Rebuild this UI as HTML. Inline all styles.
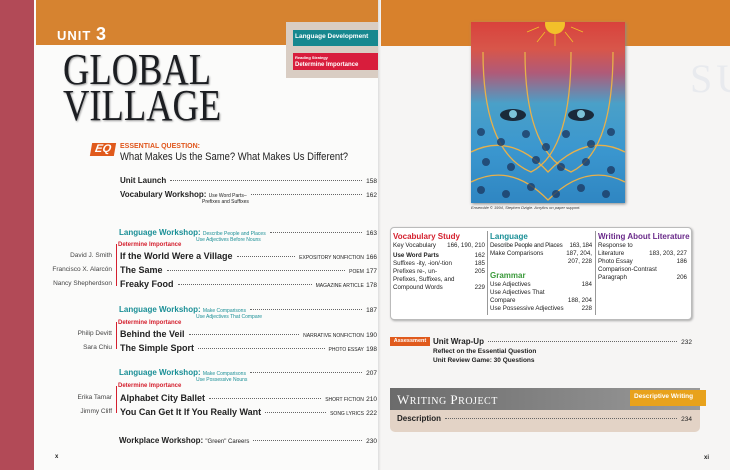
<!DOCTYPE html>
<html><head><meta charset="utf-8"><style>
*{margin:0;padding:0;box-sizing:border-box}
body{width:730px;height:470px;overflow:hidden;background:#f7f6f4;font-family:"Liberation Sans",sans-serif;position:relative;color:#222}
.a{position:absolute;white-space:nowrap}
.b{font-weight:bold}
.row{position:absolute;display:flex;align-items:baseline;font-size:8px}
.dots{flex:1;border-bottom:1px dotted #666;margin:0 4px;transform:translateY(-2px)}
.teal{color:#1a8f96}
.red{color:#d4202e}
.sm{font-size:5px}
.auth{position:absolute;font-size:6.5px;color:#444;text-align:right;width:112px;left:0}
.di{position:absolute;font-size:6px;font-weight:bold;color:#d4202e;left:118px}
.brk{position:absolute;left:116px;width:1px;background:#d4202e}
.box div{font-size:6.2px;line-height:8px}
</style></head><body>
<!-- left page -->
<div class="a" style="left:0;top:0;width:34px;height:470px;background:#b24a57"></div>
<div class="a" style="left:34px;top:0;width:344px;height:470px;background:#fbfbfa"></div>
<div class="a" style="left:36px;top:0;width:342px;height:45px;background:#d68330"></div>
<div class="a b" style="left:57px;top:24px;font-size:13px;color:#fff;letter-spacing:1px">UNIT <span style="font-size:18px">3</span></div>
<div class="a" style="left:286px;top:22px;width:94px;height:56px;background:#d9cdc3"></div>
<div class="a b" style="left:293px;top:30px;width:87px;height:16px;background:#17888f;color:#fff;font-size:6.5px;padding:3px 2px">Language Development</div>
<div class="a b" style="left:293px;top:53px;width:87px;height:17px;background:#d81d3c;color:#fff;font-size:6px;padding:1px 2px;line-height:7px"><span style="font-size:4px">Reading Strategy</span><br>Determine Importance</div>
<div class="a" style="left:63px;top:52px;font-family:'Liberation Serif',serif;font-size:44px;line-height:36px;color:#1c1e22;transform:scaleX(0.83);transform-origin:left top;text-shadow:1px 1px 2px #999">GLOBAL<br>VILLAGE</div>
<div class="a b" style="left:91px;top:143px;width:24px;height:13px;background:#e05a1c;color:#fff;font-size:11px;font-style:italic;text-align:center;line-height:13px;transform:skewX(-10deg)">EQ</div>
<div class="a b" style="left:120px;top:143px;font-size:7px;color:#e0561c">ESSENTIAL QUESTION:</div>
<div class="a" style="left:120px;top:151px;font-size:11px;color:#222;transform:scaleX(0.86);transform-origin:left top">What Makes Us the Same? What Makes Us Different?</div>

<div class="row" style="left:120px;top:176px;width:257px"><span class="b">Unit Launch</span><span class="dots"></span><span style="font-size:6.5px">158</span></div>
<div class="row" style="left:120px;top:190px;width:257px"><span class="b">Vocabulary Workshop:</span>&nbsp;<span class="sm">Use Word Parts–</span><span class="dots"></span><span style="font-size:6.5px">162</span></div>
<div class="a sm" style="left:202px;top:199px">Prefixes and Suffixes</div>

<div class="row" style="left:119px;top:228px;width:258px"><span class="b teal">Language Workshop:</span>&nbsp;<span class="sm teal">Describe People and Places</span><span class="dots"></span><span style="font-size:6.5px">163</span></div>
<div class="a sm teal" style="left:196px;top:237px">Use Adjectives Before Nouns</div>
<div class="brk" style="top:244px;height:42px"></div><div class="di" style="top:242px">Determine Importance</div>
<div class="auth" style="top:252px">David J. Smith</div>
<div class="row" style="left:120px;top:251px;width:257px"><span class="b" style="font-size:9px">If the World Were a Village</span><span class="dots"></span><span class="sm">EXPOSITORY NONFICTION</span>&nbsp;<span style="font-size:6.5px">166</span></div>
<div class="auth" style="top:266px">Francisco X. Alarcón</div>
<div class="row" style="left:120px;top:265px;width:257px"><span class="b" style="font-size:9px">The Same</span><span class="dots"></span><span class="sm">POEM</span>&nbsp;<span style="font-size:6.5px">177</span></div>
<div class="auth" style="top:280px">Nancy Shepherdson</div>
<div class="row" style="left:120px;top:279px;width:257px"><span class="b" style="font-size:9px">Freaky Food</span><span class="dots"></span><span class="sm">MAGAZINE ARTICLE</span>&nbsp;<span style="font-size:6.5px">178</span></div>

<div class="row" style="left:119px;top:305px;width:258px"><span class="b teal">Language Workshop:</span>&nbsp;<span class="sm teal">Make Comparisons</span><span class="dots"></span><span style="font-size:6.5px">187</span></div>
<div class="a sm teal" style="left:196px;top:314px">Use Adjectives That Compare</div>
<div class="brk" style="top:322px;height:27px"></div><div class="di" style="top:320px">Determine Importance</div>
<div class="auth" style="top:330px">Philip Devitt</div>
<div class="row" style="left:120px;top:329px;width:257px"><span class="b" style="font-size:9px">Behind the Veil</span><span class="dots"></span><span class="sm">NARRATIVE NONFICTION</span>&nbsp;<span style="font-size:6.5px">190</span></div>
<div class="auth" style="top:344px">Sara Chiu</div>
<div class="row" style="left:120px;top:343px;width:257px"><span class="b" style="font-size:9px">The Simple Sport</span><span class="dots"></span><span class="sm">PHOTO ESSAY</span>&nbsp;<span style="font-size:6.5px">198</span></div>

<div class="row" style="left:119px;top:368px;width:258px"><span class="b teal">Language Workshop:</span>&nbsp;<span class="sm teal">Make Comparisons</span><span class="dots"></span><span style="font-size:6.5px">207</span></div>
<div class="a sm teal" style="left:196px;top:377px">Use Possessive Nouns</div>
<div class="brk" style="top:386px;height:27px"></div><div class="di" style="top:383px">Determine Importance</div>
<div class="auth" style="top:394px">Erika Tamar</div>
<div class="row" style="left:120px;top:393px;width:257px"><span class="b" style="font-size:9px">Alphabet City Ballet</span><span class="dots"></span><span class="sm">SHORT FICTION</span>&nbsp;<span style="font-size:6.5px">210</span></div>
<div class="auth" style="top:408px">Jimmy Cliff</div>
<div class="row" style="left:120px;top:407px;width:257px"><span class="b" style="font-size:9px">You Can Get It If You Really Want</span><span class="dots"></span><span class="sm">SONG LYRICS</span>&nbsp;<span style="font-size:6.5px">222</span></div>
<div class="row" style="left:119px;top:436px;width:258px"><span class="b">Workplace Workshop:</span>&nbsp;<span style="font-size:6px">"Green" Careers</span><span class="dots"></span><span style="font-size:6.5px">230</span></div>
<div class="a b" style="left:55px;top:454px;font-size:6px">x</div>

<!-- right page -->
<div class="a" style="left:378px;top:0;width:352px;height:470px;background:#f6f5f4;overflow:hidden">
<div class="a" style="left:312px;top:55px;font-family:'Liberation Serif',serif;font-size:40px;color:#e8eaee;letter-spacing:4px">SURV</div>
</div>
<div class="a" style="left:378px;top:0;width:3px;height:470px;background:linear-gradient(90deg,#ddd,#f6f5f4)"></div>
<div class="a" style="left:381px;top:0;width:349px;height:46px;background:#d8812c"></div>
<div class="a" style="left:471px;top:22px;width:154px;height:181px;background:linear-gradient(180deg,#d9423c 0%,#d8564a 15%,#b05a78 28%,#4aa0c8 45%,#3b97cf 70%,#2f86c2 100%);box-shadow:1px 1px 3px #888;overflow:hidden">
<svg width="154" height="181" viewBox="0 0 154 181">
<circle cx="84" cy="2" r="10" fill="#f2c02a"/>
<g stroke="#f2c02a" stroke-width="0.8">
<path d="M84 12 L84 24 M74 10 L66 20 M94 10 L102 20 M68 5 L56 10 M100 5 L112 10"/></g>
<g stroke="#e8b04a" stroke-width="1.3" fill="none">
<path d="M12 30 Q12 130 60 150 Q100 130 100 30"/><path d="M54 30 Q54 130 100 150 Q142 130 142 30"/>
<path d="M0 130 Q40 110 77 150 Q115 110 154 130"/><path d="M0 160 Q40 140 77 178 Q115 140 154 160"/>
</g>
<ellipse cx="42" cy="93" rx="13" ry="6" fill="#1a2a3a"/><circle cx="42" cy="92" r="4" fill="#7cc3d8"/>
<ellipse cx="110" cy="93" rx="13" ry="6" fill="#1a2a3a"/><circle cx="110" cy="92" r="4" fill="#7cc3d8"/>
<g fill="#1d3c66" opacity=".8">
<circle cx="10" cy="110" r="4"/><circle cx="30" cy="120" r="4"/><circle cx="55" cy="112" r="4"/><circle cx="75" cy="125" r="4"/><circle cx="95" cy="112" r="4"/><circle cx="120" cy="122" r="4"/><circle cx="140" cy="110" r="4"/>
<circle cx="15" cy="140" r="4"/><circle cx="40" cy="145" r="4"/><circle cx="65" cy="138" r="4"/><circle cx="90" cy="145" r="4"/><circle cx="115" cy="140" r="4"/><circle cx="140" cy="148" r="4"/>
<circle cx="10" cy="168" r="4"/><circle cx="35" cy="172" r="4"/><circle cx="60" cy="165" r="4"/><circle cx="85" cy="172" r="4"/><circle cx="110" cy="166" r="4"/><circle cx="135" cy="172" r="4"/>
</g></svg></div>
<div class="a" style="left:471px;top:205px;font-size:4px;font-style:italic;color:#333">Ensemble © 1994, Stephen Dzigle. Acrylics on paper support.</div>

<div class="a box" style="left:390px;top:227px;width:302px;height:93px;background:#fff;border:1px solid #bbb;border-radius:4px;box-shadow:1px 1px 2px #aaa"></div>
<div class="a box" style="left:393px;top:231px;width:92px">
<div class="b red" style="font-size:8px;line-height:11px">Vocabulary Study</div>
<div style="display:flex;justify-content:space-between"><span>Key Vocabulary</span><span>166, 190, 210</span></div>
<div class="b" style="display:flex;justify-content:space-between;margin-top:2px"><span>Use Word Parts</span><span style="font-weight:normal">162</span></div>
<div style="display:flex;justify-content:space-between"><span>Suffixes -ity, -ion/-tion</span><span>185</span></div>
<div style="display:flex;justify-content:space-between"><span>Prefixes re-, un-</span><span>205</span></div>
<div>Prefixes, Suffixes, and</div>
<div style="display:flex;justify-content:space-between"><span>Compound Words</span><span>229</span></div></div>
<div class="a" style="left:487px;top:231px;width:1px;height:84px;background:#999"></div>
<div class="a box" style="left:490px;top:231px;width:102px">
<div class="b teal" style="font-size:8px;line-height:11px">Language</div>
<div style="display:flex;justify-content:space-between;letter-spacing:-0.2px"><span>Describe People and Places</span><span>&nbsp;163, 184</span></div>
<div style="display:flex;justify-content:space-between"><span>Make Comparisons</span><span>187, 204,</span></div>
<div style="text-align:right">207, 228</div>
<div class="b" style="color:#3a9a3a;font-size:8px;line-height:11px;margin-top:4px">Grammar</div>
<div style="display:flex;justify-content:space-between"><span>Use Adjectives</span><span>184</span></div>
<div>Use Adjectives That</div>
<div style="display:flex;justify-content:space-between"><span>Compare</span><span>188, 204</span></div>
<div style="display:flex;justify-content:space-between"><span>Use Possessive Adjectives</span><span>228</span></div></div>
<div class="a" style="left:595px;top:231px;width:1px;height:84px;background:#999"></div>
<div class="a box" style="left:598px;top:231px;width:89px">
<div class="b" style="color:#6a2a8a;font-size:8px;line-height:11px">Writing About Literature</div>
<div>Response to</div>
<div style="display:flex;justify-content:space-between"><span>Literature</span><span>183, 203, 227</span></div>
<div style="display:flex;justify-content:space-between"><span>Photo Essay</span><span>186</span></div>
<div>Comparison-Contrast</div>
<div style="display:flex;justify-content:space-between"><span>Paragraph</span><span>206</span></div></div>

<div class="a b" style="left:390px;top:337px;width:40px;height:9px;background:#e05a1c;color:#fff;font-size:5.5px;text-align:center;line-height:9px">Assessment</div>
<div class="row" style="left:433px;top:337px;width:259px"><span class="b">Unit Wrap-Up</span><span class="dots"></span><span style="font-size:6.5px">232</span></div>
<div class="a b" style="left:433px;top:348px;font-size:6.5px">Reflect on the Essential Question</div>
<div class="a b" style="left:433px;top:357px;font-size:6.5px">Unit Review Game: 30 Questions</div>

<div class="a" style="left:390px;top:388px;width:310px;height:44px;background:#e3d3c6;border-radius:0 0 5px 5px"></div>
<div class="a" style="left:390px;top:388px;width:310px;height:22px;background:linear-gradient(90deg,#6b6b6b,#9a9a9a)"></div>
<div class="a" style="left:397px;top:392px;font-family:'Liberation Serif',serif;font-size:13px;color:#fff;letter-spacing:.5px">W<span style="font-size:10px">RITING</span> P<span style="font-size:10px">ROJECT</span></div>
<div class="a b" style="left:630px;top:390px;width:76px;height:16px;background:#e8a21c;color:#fff;font-size:6.5px;padding:3px 4px">Descriptive Writing</div>
<div class="row" style="left:397px;top:414px;width:295px"><span class="b">Description</span><span class="dots"></span><span style="font-size:6.5px">234</span></div>
<div class="a b" style="left:704px;top:455px;font-size:6px">xi</div>
</body></html>
